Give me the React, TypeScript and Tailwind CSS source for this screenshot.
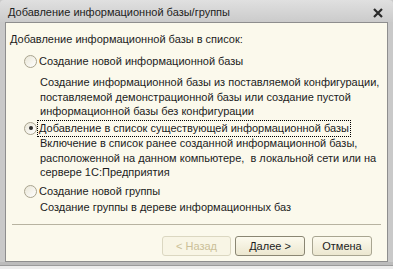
import React from "react";

function Radio({ checked }: { checked?: boolean }) {
  return (
    <span className="relative w-[13px] h-[13px] rounded-full border border-[#a9a48f] bg-gradient-to-br from-[#e9e6d6] to-[#ffffff] shrink-0">
      {checked && <span className="absolute left-[3.5px] top-[3.5px] w-[4px] h-[4px] rounded-full bg-[#2e2e2e]" />}
    </span>
  );
}

function Option({ label, desc, checked, gap }: { label: string; desc: string[]; checked?: boolean; gap: string }) {
  return (
    <div className="flex flex-col">
      <div className="flex items-center gap-[1px] pl-[18px] h-[16px]">
        <Radio checked={checked} />
        <span className={checked ? "outline outline-1 outline-dotted outline-black leading-[15px] px-[1px]" : "px-[1px]"}>{label}</span>
      </div>
      <div className={`pl-[34px] leading-[14.5px] ${gap}`}>
        {desc.map(l => (
          <div key={l} className="whitespace-pre">{l}</div>
        ))}
      </div>
    </div>
  );
}

export default function App() {
  return (
    <div className="w-[393px] h-[269px] bg-[#c9c9c9] flex flex-col text-[#1c1c1c] text-[11px] font-['Liberation_Sans',Arial,sans-serif]">
      <div className="h-[22px] flex items-center justify-between pl-[8px] pr-[10px] pt-[3px] bg-gradient-to-b from-[#e0e0e0] to-[#cbcbcb] rounded-t-[4px] text-[#222]">
        <span>Добавление информационной базы/группы</span>
        <svg width="10" height="10" viewBox="0 0 10 10">
          <path d="M1 1 L9 9 M9 1 L1 9" stroke="#2a2a2a" strokeWidth="2.2" />
        </svg>
      </div>
      <div className="mx-[5px] h-[240px] bg-[#fbf9ec] border border-[#8e8e8e] flex flex-col">
        <div className="pl-[4px] pt-[9px] h-[30px] leading-[14px]">Добавление информационной базы в список:</div>
        <Option
          gap="pt-[6px]"
          label="Создание новой информационной базы"
          desc={[
            "Создание информационной базы из поставляемой конфигурации,",
            "поставляемой демонстрационной базы или создание пустой",
            "информационной базы без конфигурации",
          ]}
        />
        <div className="h-[1.5px]" />
        <Option
          checked
          gap="pt-0"
          label="Добавление в список существующей информационной базы"
          desc={[
            "Включение в список ранее созданной информационной базы,",
            "расположенной на данном компьютере,  в локальной сети или на",
            "сервере 1С:Предприятия",
          ]}
        />
        <div className="h-[4px]" />
        <Option gap="pt-0" label="Создание новой группы" desc={["Создание группы в дереве информационных баз"]} />
        <div className="mx-[6px] mt-[10px] border-t border-[#b7b3a1]" />
        <div className="flex justify-end pr-[15px] pt-[11px]">
          <button className="w-[69px] h-[20px] rounded-[3px] border border-[#dbd7c1] bg-[#f8f5e5] text-[#cbbf98]">&lt; Назад</button>
          <button className="ml-[4px] w-[70px] h-[20px] rounded-[3px] border border-[#8a8673] bg-gradient-to-b from-[#fcfaee] to-[#ece7d0]">Далее &gt;</button>
          <button className="ml-[7px] w-[60px] h-[20px] rounded-[3px] border border-[#a8a591] bg-gradient-to-b from-[#fcfaee] to-[#ece7d0]">Отмена</button>
        </div>
      </div>
      <div className="h-[3px] bg-[#bcbcbc]" />
      <div className="flex-1 bg-[#ececec] border-t border-[#9a9a9a]" />
    </div>
  );
}
